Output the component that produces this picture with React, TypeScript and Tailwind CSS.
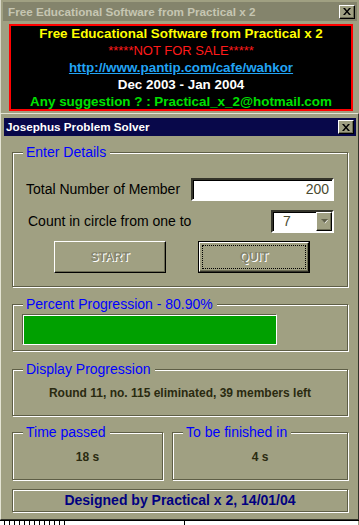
import React from 'react'

const etched = 'border border-[#5e5e46] shadow-[inset_1px_1px_0_#ffffff,1px_1px_0_#ffffff]'

function CloseButton() {
  return (
    <div className="w-[16px] h-[14px] bg-[#a0a082] border border-t-white border-l-white border-r-black border-b-black shadow-[inset_-1px_-1px_0_#6c6c54] flex items-center justify-center">
      <svg width="8" height="7" viewBox="0 0 8 7">
        <path d="M0 0h2l2 2.5L6 0h2L5 3.5 8 7H6L4 4.5 2 7H0l3-3.5z" fill="#000" />
      </svg>
    </div>
  )
}

interface GroupProps {
  label: string
  className?: string
  children?: React.ReactNode
}

function Group({ label, className, children }: GroupProps) {
  return (
    <div className={`relative ${etched} ${className ?? ''}`}>
      <span className="absolute top-[-9px] left-[10px] bg-[#a0a082] pl-[3px] pr-[4px] text-[14px] leading-[16px] text-[#0000ff]">
        {label}
      </span>
      {children}
    </div>
  )
}

export default function App() {
  return (
    <div className="w-[359px] h-[525px] overflow-hidden bg-[#a0a082] font-['Liberation_Sans',Arial,sans-serif] flex flex-col">
      {/* info window */}
      <div className="h-[113px] shrink-0 flex flex-col px-[2px] pt-[2px] border-l border-[#d8d8c8]">
        <div className="h-[19px] bg-[#84846c] flex items-center justify-between pl-[5px] pr-[2px]">
          <span className="text-[11.7px] font-bold text-[#c6c6b2]">Free Educational Software from Practical x 2</span>
          <CloseButton />
        </div>
        <div className="ml-[6px] mr-[4px] mt-[3px] h-[87px] border-2 border-[#ff0000] bg-black flex flex-col items-center justify-center text-[13.4px] font-bold leading-[17px] whitespace-nowrap">
          <span className="text-[#ffff00]">Free Educational Software from Practical x 2</span>
          <span className="text-[#ff1a1a] font-normal text-[13px]">*****NOT FOR SALE*****</span>
          <span className="text-[#22a4f4] underline">http://www.pantip.com/cafe/wahkor</span>
          <span className="text-white">Dec 2003 - Jan 2004</span>
          <span className="text-[#00e000]">Any suggestion ? : Practical_x_2@hotmail.com</span>
        </div>
      </div>

      {/* main dialog */}
      <div className="flex-1 flex flex-col border border-t-[#e4e4d4] border-l-[#e4e4d4] border-r-[#34342a] border-b-[#34342a] pt-[4px] pl-[3px] pr-[2px]">
        <div className="h-[18px] bg-[#08084a] flex items-center justify-between pl-[2px] pr-[2px]">
          <span className="text-[11.7px] font-bold text-white">Josephus Problem Solver</span>
          <CloseButton />
        </div>

        <div className="flex flex-col px-[8px]">
          <Group label="Enter Details" className="mt-[16px] h-[135px] pt-[25px]">
            <div className="h-[23px] flex items-center justify-between pl-[13px] pr-[13px]">
              <span className="text-[14px] text-black">Total Number of Member</span>
              <div className="w-[143px] h-[23px] bg-white border-2 border-t-[#34342a] border-l-[#34342a] border-r-white border-b-white shadow-[inset_1px_1px_0_#000]">
                <div className="h-full flex items-center justify-end pr-[3px] text-[14px] text-[#4a4a30]">200</div>
              </div>
            </div>
            <div className="mt-[9px] h-[23px] flex items-center justify-between pl-[15px] pr-[13px]">
              <span className="text-[14px] text-black">Count in circle from one to</span>
              <div className="w-[63px] h-[23px] bg-white border-2 border-t-[#34342a] border-l-[#34342a] border-r-white border-b-white shadow-[inset_1px_1px_0_#000] flex">
                <div className="flex-1 flex items-center pl-[10px] text-[14px] text-[#4a4a30]">7</div>
                <div className="w-[16px] h-full bg-[#a0a082] border border-t-white border-l-white border-r-black border-b-black shadow-[inset_-1px_-1px_0_#6c6c54] flex items-center justify-center">
                  <svg width="7" height="5" viewBox="0 0 7 5">
                    <path d="M1 1h6L4 4.5z" fill="#ffffff" />
                    <path d="M0 0h7L3.5 4z" fill="#60604a" />
                  </svg>
                </div>
              </div>
            </div>
            <div className="mt-[8px] flex gap-[32px] pl-[41px]">
              <div className="w-[112px] h-[32px] border border-t-white border-l-white border-r-black border-b-black shadow-[inset_-1px_-1px_0_#6c6c54] flex items-center justify-center text-[12px] font-bold text-[#84846c] [text-shadow:1px_1px_0_#ffffff]">
                START
              </div>
              <div className="w-[112px] h-[32px] border border-black">
                <div className="h-full border border-t-white border-l-white border-r-black border-b-[#34342a] shadow-[inset_-1px_-1px_0_#6c6c54] p-[2px]">
                  <div className="h-full border border-dotted border-black flex items-center justify-center text-[12px] font-bold text-[#84846c] [text-shadow:1px_1px_0_#ffffff]">
                    QUIT
                  </div>
                </div>
              </div>
            </div>
          </Group>

          <Group label="Percent Progression - 80.90%" className="mt-[17px] h-[47px] pt-[9px] pl-[9px]">
            <div className="w-[255px] h-[31px] border border-t-[#60604a] border-l-[#60604a] border-r-white border-b-white shadow-[inset_1px_1px_0_#ffffff]">
              <div className="h-full bg-[#00a000] border-t border-l border-white" />
            </div>
          </Group>

          <Group label="Display Progression" className="mt-[18px] h-[47px] flex items-center justify-center">
            <span className="text-[12px] font-bold text-[#2a2a10] mt-[1px]">Round 11, no. 115 eliminated, 39 members left</span>
          </Group>

          <div className="mt-[16px] flex gap-[9px]">
            <Group label="Time passed" className="w-[151px] h-[48px] flex items-center justify-center">
              <span className="text-[12px] font-bold text-[#2a2a10] mt-[1px]">18 s</span>
            </Group>
            <Group label="To be finished in" className="flex-1 h-[48px] flex items-center justify-center">
              <span className="text-[12px] font-bold text-[#2a2a10] mt-[1px]">4 s</span>
            </Group>
          </div>

          <div className={`mt-[9px] h-[23px] ${etched} flex items-center justify-center`}>
            <span className="text-[14px] font-bold text-[#000080]">Designed by Practical x 2, 14/01/04</span>
          </div>
        </div>
      </div>

      {/* window behind */}
      <div className="h-[5px] shrink-0 bg-white border-t border-black flex">
        <div className="w-[68px] h-full flex">
          <div className="w-[5px] border-r border-black" />
          <div className="w-[5px] border-r border-black" />
          <div className="w-[5px] border-r border-black" />
          <div className="w-[5px] border-r border-black" />
          <div className="w-[5px] border-r border-black" />
          <div className="w-[5px] border-r border-black" />
          <div className="w-[5px] border-r border-black" />
          <div className="w-[5px] border-r border-black" />
          <div className="w-[5px] border-r border-black" />
          <div className="w-[5px] border-r border-black" />
          <div className="w-[5px] border-r border-black" />
          <div className="w-[5px] border-r border-black" />
          <div className="w-[5px] border-r border-black" />
        </div>
        <div className="w-[137px] border-r border-black" />
        <div className="w-[200px] border-r border-[#a0a082]" />
      </div>
    </div>
  )
}
